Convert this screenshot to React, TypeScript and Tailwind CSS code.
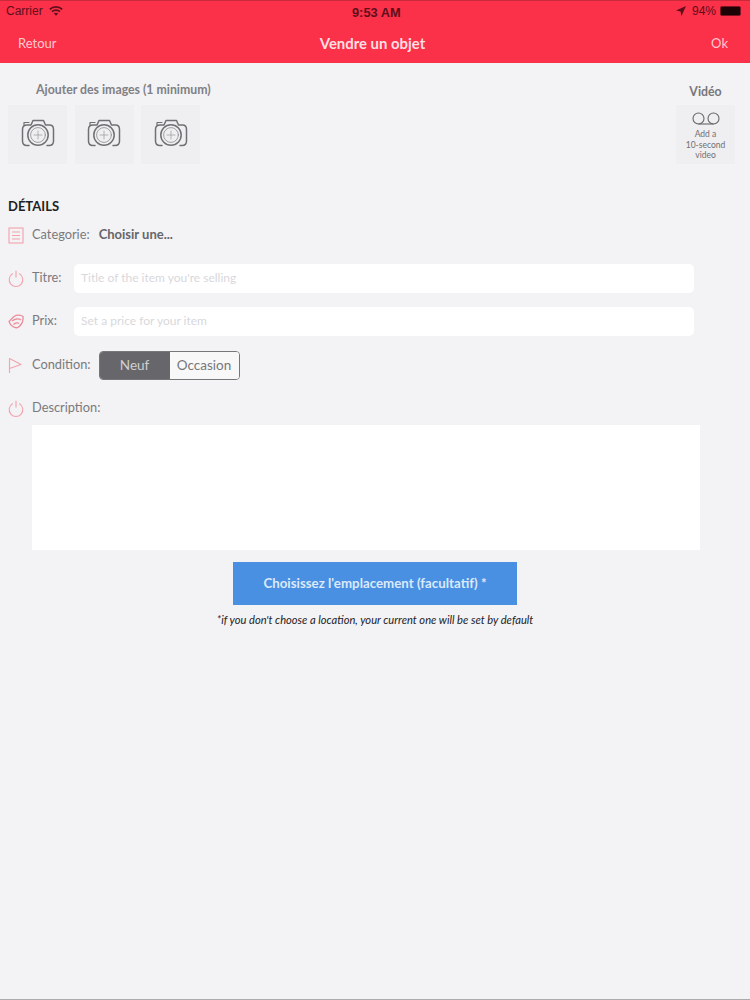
// App.tsx
import React from 'react';

const font = "font-['Lato','Noto_Sans',sans-serif]";

const CameraIcon = () => (
  <svg width="34" height="28" viewBox="0 0 34 28" fill="none" stroke="#707074" strokeWidth="1.5" strokeLinecap="round" strokeLinejoin="round">
    {/* body is open at the bottom where the lens sits */}
    <path d="M8 26.5 H6 C3 26.5 1.5 25 1.5 22 V10.5 C1.5 7.5 3 6 6 6 H10 L12 1.5 H22.5 L24.5 6 H28.5 C31.5 6 32.5 7.5 32.5 10.5 V22 C32.5 25 31 26.5 28 26.5 H26" />
    <path d="M3 6 V3.5 H8" strokeWidth="1.2" />
    <circle cx="17" cy="16" r="10.2" />
    <circle cx="17" cy="16" r="7.4" strokeWidth="0.8" stroke="#8c8c90" />
    <path d="M17 12 V20 M13 16 H21" strokeWidth="0.8" stroke="#a2a2a6" />
  </svg>
);

const PhotoTile = () => (
  <div className="w-[59px] h-[59px] bg-[#efeef0] flex items-center justify-center pb-[3px]">
    <CameraIcon />
  </div>
);

const ListIcon = () => (
  <svg width="16" height="17" viewBox="0 0 16 17" fill="none" stroke="#f2a3ae" strokeWidth="1.1">
    <rect x="1" y="1" width="14" height="15" />
    <path d="M4 5 H12 M4 8.5 H12 M4 12 H12" />
  </svg>
);

const PowerIcon = () => (
  <svg width="16" height="17" viewBox="0 0 16 17" fill="none" stroke="#f2a3ae" strokeWidth="1.1" strokeLinecap="round">
    <path d="M4.5 3.8 A6.8 6.8 0 1 0 11.5 3.8 M8 1 V7" />
  </svg>
);

const TagIcon = () => (
  <svg width="16" height="15" viewBox="0 0 16 15" fill="none" stroke="#ec8e9c" strokeWidth="1.3" strokeLinejoin="round">
    <path d="M1 7.5 L6 2.5 C9 0.5 13 1 15 2.5 C15.5 6.5 14 10.5 10 13.5 C6.5 14.5 2.5 12 1 7.5 Z" />
    <path d="M4 7 C7 4.5 11 4.5 13 6 M5.5 10.5 C7.5 8.5 10 8.5 11 9.5" />
  </svg>
);

const FlagIcon = () => (
  <svg width="14" height="17" viewBox="0 0 14 17" fill="none" stroke="#f2a3ae" strokeWidth="1.1" strokeLinejoin="round">
    <path d="M1.5 16 V1.5 L13 7.5 L1.5 11.5" />
  </svg>
);

const RowLabel = ({ children }: { children: React.ReactNode }) => (
  <span className="text-[12.8px] text-[#7a7a7e] pb-[1px]">{children}</span>
);

const TextField = ({ placeholder }: { placeholder: string }) => (
  <div className="ml-auto w-[620px] h-[29px] bg-white rounded-[5px] flex items-center px-[7px] pb-[2px] text-[12px] text-[#d8d8dc]">
    {placeholder}
  </div>
);

const App = () => {
  return (
    <div className={`${font} w-[750px] h-[1000px] bg-[#f3f2f4] flex flex-col border-b border-[#ababab]`}>
      <header className="h-[63px] shrink-0 bg-[#fb3049] border-t border-[#c92a3c] flex flex-col">
        <div className="h-[20px] px-[6px] flex items-center justify-between text-[12px] text-[#5f0f1a] font-['Liberation_Sans',sans-serif] relative">
          <div className="flex items-center gap-[6px]">
            <span>Carrier</span>
            <svg width="14" height="10" viewBox="0 0 14 10" fill="none" stroke="#5f0f1a" strokeWidth="1.7">
              <path d="M0.8 3.4 C4.2 0 9.8 0 13.2 3.4 M3 5.6 C5.2 3.6 8.8 3.6 11 5.6" />
              <path d="M7 9.8 L4.8 7.6 C6 6.6 8 6.6 9.2 7.6 Z" fill="#5f0f1a" stroke="none" />
            </svg>
          </div>
          <span className="font-bold text-[12.8px] absolute left-[352px] top-[2px]">9:53 AM</span>
          <div className="flex items-center gap-[4px] pr-[3px]">
            <svg width="10" height="10" viewBox="0 0 10 10" fill="#5f0f1a">
              <path d="M10 0 L0 4.5 L4.5 5.5 L5.5 10 Z" />
            </svg>
            <span className="ml-[2px]">94%</span>
            <div className="w-[21px] h-[10px] bg-[#1d0306] border border-[#7a1522] rounded-[2px]" />
          </div>
        </div>
        <div className="flex-1 px-[18px] flex items-center text-[13px] text-[#ffc9cf] pt-[3px]">
          <span className="flex-1">Retour</span>
          <span className="text-[14.9px] font-bold text-[#ffdfe2] pr-[1px]">Vendre un objet</span>
          <span className="flex-1 text-right pr-[4px]">Ok</span>
        </div>
      </header>

      <main className="flex-1 flex flex-col">
        <section className="flex justify-between pl-[8px] pr-[15px] pt-[18px]">
          <div>
            <p className="pl-[28px] h-[17px] leading-[17px] text-[12.3px] font-bold text-[#808084]">Ajouter des images (1 minimum)</p>
            <div className="mt-[7px] flex gap-[7.5px]">
              <PhotoTile />
              <PhotoTile />
              <PhotoTile />
            </div>
          </div>
          <div className="flex flex-col items-center">
            <p className="h-[19px] pt-[2px] leading-[17px] text-[12.3px] font-bold text-[#77777b]">Vidéo</p>
            <div className="mt-[5px] w-[59px] h-[59px] bg-[#efeef0] flex flex-col items-center pt-[7px]">
              <svg width="30" height="14" viewBox="0 0 30 14" fill="none" stroke="#66666a" strokeWidth="1.1">
                <circle cx="7.5" cy="6.5" r="5.5" />
                <circle cx="22.5" cy="6.5" r="5.5" />
                <path d="M7.5 12 H22.5" />
              </svg>
              <p className="mt-[3px] text-[8.5px] leading-[10.5px] text-center text-[#6f6f73]">
                Add a<br />10-second<br />video
              </p>
            </div>
          </div>
        </section>

        <h2 className="mt-[33px] pl-[8px] h-[18px] leading-[18px] text-[13px] font-bold text-[#1f1f24]">DÉTAILS</h2>

        <div className="pl-[8px] pr-[56px] flex flex-col">
          <div className="mt-[10px] h-[20px] flex items-center">
            <span className="w-[24px] flex"><ListIcon /></span>
            <RowLabel>Categorie:</RowLabel>
            <span className="ml-[9px] text-[13px] font-bold text-[#66666a]">Choisir une...</span>
          </div>

          <div className="mt-[19px] h-[29px] flex items-center">
            <span className="w-[24px] flex"><PowerIcon /></span>
            <RowLabel>Titre:</RowLabel>
            <TextField placeholder="Title of the item you're selling" />
          </div>

          <div className="mt-[14px] h-[29px] flex items-center">
            <span className="w-[24px] flex"><TagIcon /></span>
            <RowLabel>Prix:</RowLabel>
            <TextField placeholder="Set a price for your item" />
          </div>

          <div className="mt-[14px] h-[30px] flex items-center">
            <span className="w-[24px] flex"><FlagIcon /></span>
            <RowLabel>Condition:</RowLabel>
            <div className="ml-[8px] w-[141px] h-[29px] flex rounded-[4px] border border-[#77777b] overflow-hidden text-[13.5px]">
              <span className="w-[70px] bg-[#67676b] text-[#d0d0d2] flex items-center justify-center">Neuf</span>
              <span className="flex-1 bg-[#f8f8f9] text-[#77777b] flex items-center justify-center">Occasion</span>
            </div>
          </div>

          <div className="mt-[18px] h-[20px] flex items-center">
            <span className="w-[24px] flex"><PowerIcon /></span>
            <RowLabel>Description:</RowLabel>
          </div>
        </div>

        <div className="ml-[32px] mt-[7px] w-[668px] h-[125px] bg-white" />

        <button className="mx-auto mt-[12px] w-[284px] h-[43px] bg-[#4a90e2] text-[13.3px] font-bold text-[#dbe9fa]">
          Choisissez l'emplacement (facultatif) *
        </button>
        <p className="mt-[7px] text-center text-[11.15px] italic text-[#222226]">
          *if you don't choose a location, your current one will be set by default
        </p>
      </main>
    </div>
  );
};

export default App;
